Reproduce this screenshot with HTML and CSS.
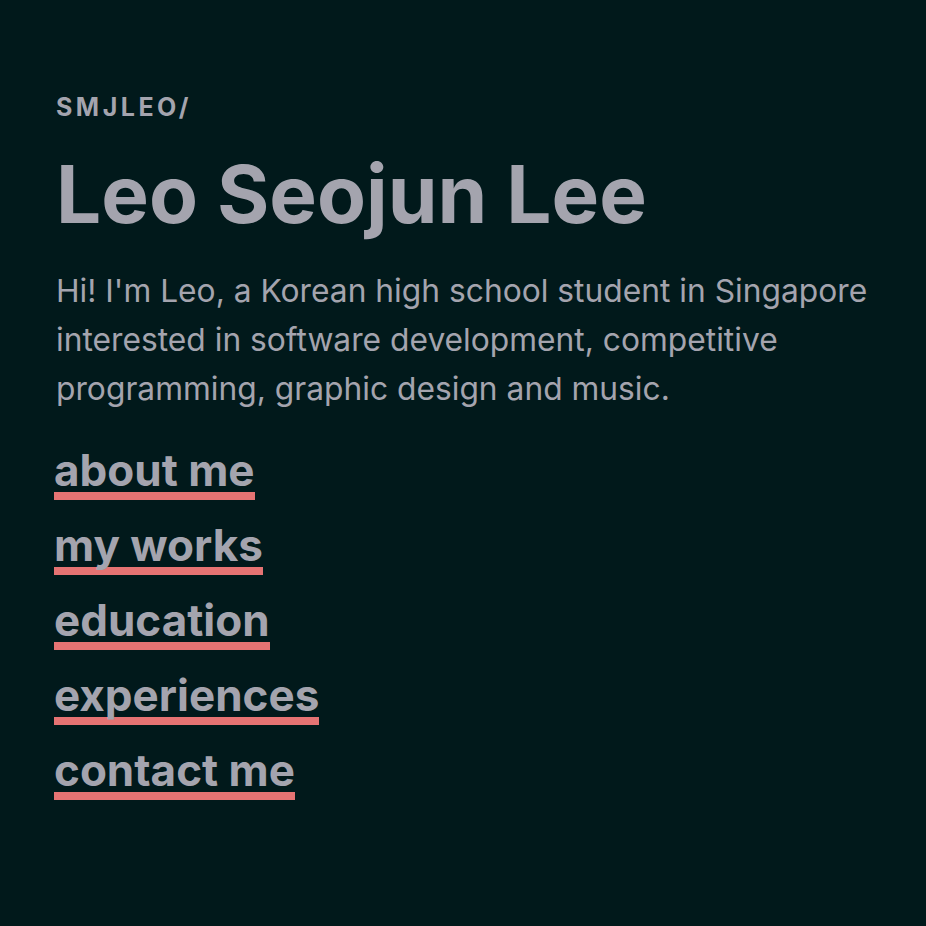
FILE: index.html
```html
<!DOCTYPE html>
<html lang="en">
<head>
<meta charset="utf-8">
<link rel="stylesheet" href="styles.css">
<title>Leo Seojun Lee</title>
</head>
<body>
<main class="page">
  <p class="handle">SMJLEO/</p>
  <h1 class="name">Leo Seojun Lee</h1>
  <p class="intro">Hi! I'm Leo, a Korean high school student in Singapore interested in software development, competitive programming, graphic design and music.</p>
  <nav class="links">
    <a class="link" href="#about">about me</a>
    <a class="link" href="#works">my works</a>
    <a class="link" href="#education">education</a>
    <a class="link" href="#experiences">experiences</a>
    <a class="link" href="#contact">contact me</a>
  </nav>
</main>
</body>
</html>
```
FILE: styles.css
```css
html, body {
  margin: 0;
  padding: 0;
  background: #01191b;
}
body {
  font-family: Inter, "Noto Sans", sans-serif;
  color: #a4a4ae;
  width: 926px;
  height: 926px;
}
.page {
  padding: 91px 40px 0 56px;
  display: flex;
  flex-direction: column;
  align-items: flex-start;
}
.handle {
  margin: 0;
  font-size: 25px;
  font-weight: 700;
  letter-spacing: 0.14em;
  line-height: 32px;
}
.name {
  margin: 26px 0 0 0;
  font-size: 80px;
  font-weight: 700;
  line-height: 90px;
}
.intro {
  margin: 27px 0 0 0;
  font-size: 31.75px;
  font-weight: 400;
  line-height: 49px;
  max-width: 830px;
}
.links {
  margin-top: 20px;
  margin-left: -2px;
  display: flex;
  flex-direction: column;
  align-items: flex-start;
}
.link {
  display: block;
  color: #a4a4ae;
  font-size: 44px;
  font-weight: 700;
  line-height: 75px;
  text-decoration: none;
  background-image: linear-gradient(#e57373, #e57373);
  background-repeat: no-repeat;
  background-size: 100% 8px;
  background-position: 0 59px;
}
```
